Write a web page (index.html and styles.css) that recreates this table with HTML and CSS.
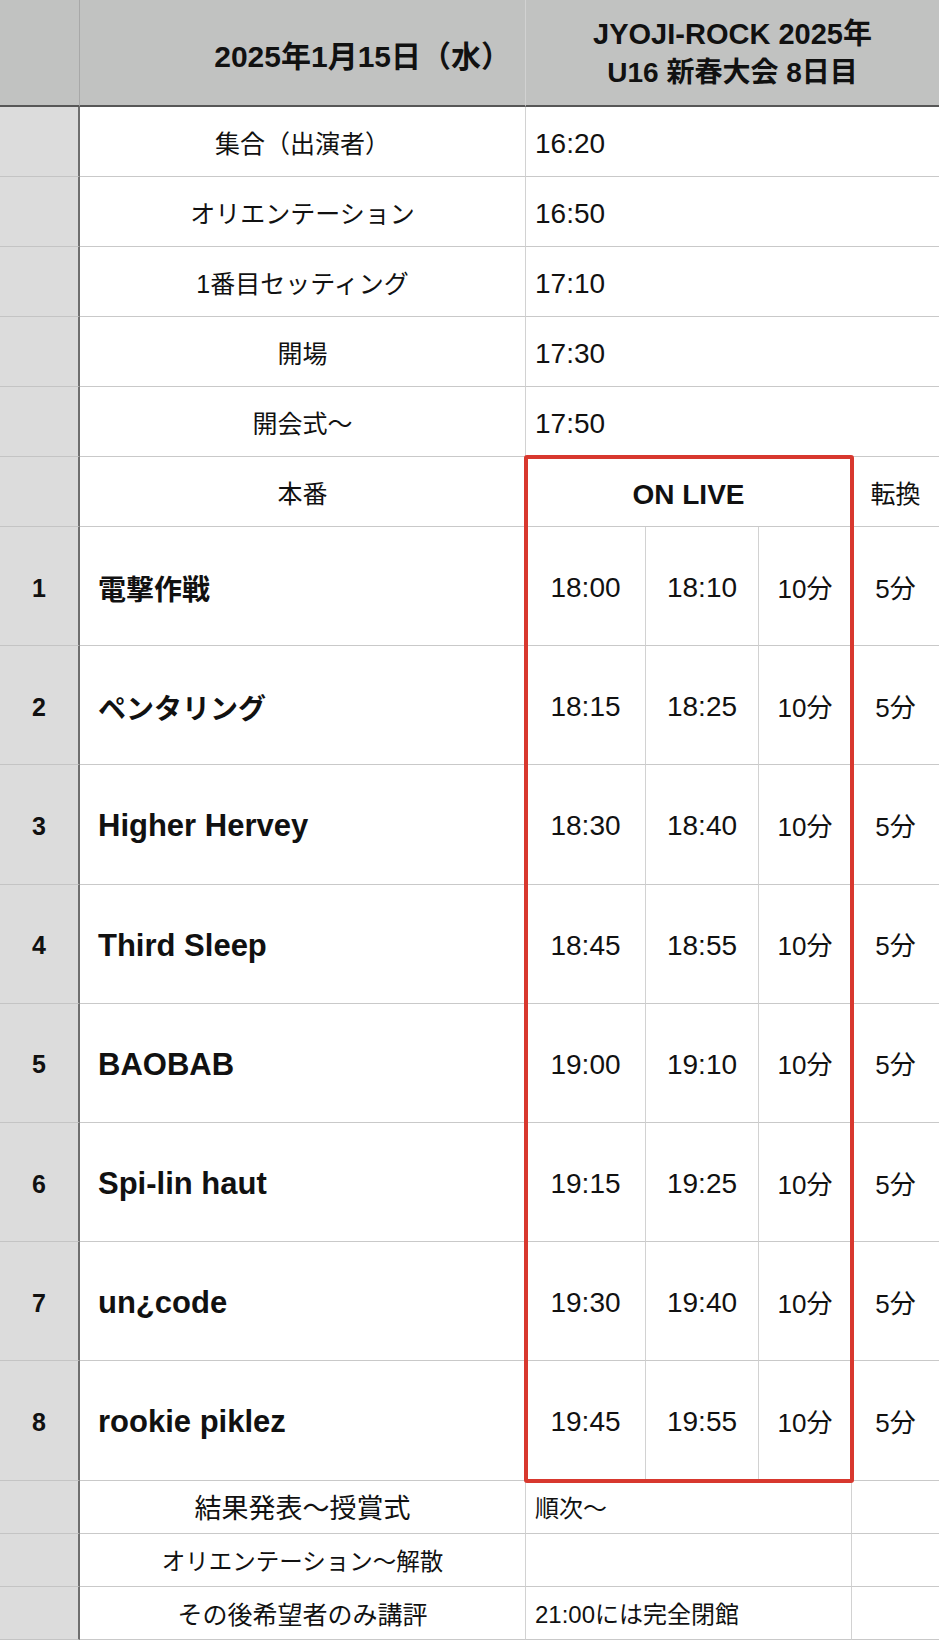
FILE: index.html
```html
<!DOCTYPE html>
<html lang="ja">
<head>
    <meta charset="UTF-8">
    <title>JYOJI-ROCK 2025年 U16 新春大会 8日目</title>
    <link rel="stylesheet" href="styles.css">
</head>
<body>
<div class="sheet">
    <div class="cell head idx"></div>
    <div class="cell head date">2025年1月15日（水）</div>
    <div class="cell head title span4">
        <p>JYOJI-ROCK 2025年<br><span class="sub">U16 新春大会 8日目</span></p>
    </div>

    <div class="cell idx"></div>
    <div class="cell label">集合（出演者）</div>
    <div class="cell time span4">16:20</div>

    <div class="cell idx"></div>
    <div class="cell label">オリエンテーション</div>
    <div class="cell time span4">16:50</div>

    <div class="cell idx"></div>
    <div class="cell label">1番目セッティング</div>
    <div class="cell time span4">17:10</div>

    <div class="cell idx"></div>
    <div class="cell label">開場</div>
    <div class="cell time span4">17:30</div>

    <div class="cell idx"></div>
    <div class="cell label">開会式～</div>
    <div class="cell time span4">17:50</div>

    <div class="cell idx"></div>
    <div class="cell label">本番</div>
    <div class="cell live span3">ON LIVE</div>
    <div class="cell change last">転換</div>

    <div class="cell idx">1</div>
    <div class="cell band jp">電撃作戦</div>
    <div class="cell slot">18:00</div>
    <div class="cell slot">18:10</div>
    <div class="cell dur">10分</div>
    <div class="cell dur last">5分</div>

    <div class="cell idx">2</div>
    <div class="cell band jp">ペンタリング</div>
    <div class="cell slot">18:15</div>
    <div class="cell slot">18:25</div>
    <div class="cell dur">10分</div>
    <div class="cell dur last">5分</div>

    <div class="cell idx">3</div>
    <div class="cell band">Higher Hervey</div>
    <div class="cell slot">18:30</div>
    <div class="cell slot">18:40</div>
    <div class="cell dur">10分</div>
    <div class="cell dur last">5分</div>

    <div class="cell idx">4</div>
    <div class="cell band">Third Sleep</div>
    <div class="cell slot">18:45</div>
    <div class="cell slot">18:55</div>
    <div class="cell dur">10分</div>
    <div class="cell dur last">5分</div>

    <div class="cell idx">5</div>
    <div class="cell band">BAOBAB</div>
    <div class="cell slot">19:00</div>
    <div class="cell slot">19:10</div>
    <div class="cell dur">10分</div>
    <div class="cell dur last">5分</div>

    <div class="cell idx">6</div>
    <div class="cell band">Spi-lin haut</div>
    <div class="cell slot">19:15</div>
    <div class="cell slot">19:25</div>
    <div class="cell dur">10分</div>
    <div class="cell dur last">5分</div>

    <div class="cell idx">7</div>
    <div class="cell band">un¿code</div>
    <div class="cell slot">19:30</div>
    <div class="cell slot">19:40</div>
    <div class="cell dur">10分</div>
    <div class="cell dur last">5分</div>

    <div class="cell idx">8</div>
    <div class="cell band">rookie piklez</div>
    <div class="cell slot">19:45</div>
    <div class="cell slot">19:55</div>
    <div class="cell dur">10分</div>
    <div class="cell dur last">5分</div>

    <div class="cell idx"></div>
    <div class="cell label size-l">結果発表～授賞式</div>
    <div class="cell note span3">順次～</div>
    <div class="cell last"></div>

    <div class="cell idx"></div>
    <div class="cell label size-s">オリエンテーション～解散</div>
    <div class="cell note span3"></div>
    <div class="cell last"></div>

    <div class="cell idx"></div>
    <div class="cell label">その後希望者のみ講評</div>
    <div class="cell note span3">21:00には完全閉館</div>
    <div class="cell last"></div>

    <div class="live-frame"></div>
</div>
</body>
</html>
```

FILE: styles.css
```css
* {
    padding: 0;
    margin: 0;
    box-sizing: border-box;
}

body {
    font-family: "Liberation Sans", "Noto Sans CJK JP", sans-serif;
    color: #111;
    background: #fff;
}

.sheet {
    position: relative;
    display: grid;
    grid-template-columns: 80px 446px 120px 113px 93px 87px;
    grid-template-rows: 107px repeat(6, 70px) repeat(8, 119.2px) repeat(3, 53.1px);
}

.cell {
    display: flex;
    align-items: center;
    border-right: 1px solid #d2d2d2;
    border-bottom: 1px solid #c9c9c9;
    font-size: 25px;
    white-space: nowrap;
}

.span4 {
    grid-column: span 4;
    border-right: 0;
}

.span3 {
    grid-column: span 3;
}

.last {
    border-right: 0;
}

.idx {
    justify-content: center;
    padding-top: 4px;
    background: #dcdcdc;
    border-right: 2px solid #6f6f6f;
    border-bottom-color: #c4c4c4;
    font-weight: bold;
    font-size: 25px;
}

.head {
    background: #c1c2c1;
    border-bottom: 2px solid #575757;
    font-weight: bold;
}

.head.idx {
    border-right: 1px solid #a8a8a8;
}

.date {
    justify-content: flex-end;
    padding-right: 14px;
    padding-top: 2px;
    font-size: 30px;
}

.title {
    justify-content: center;
    text-align: center;
    padding-top: 2px;
    font-size: 29px;
    line-height: 38px;
}

.title .sub {
    font-size: 28px;
}

.label {
    justify-content: center;
}

.size-l {
    font-size: 27px;
}

.size-s {
    font-size: 23.5px;
}

.time {
    padding-left: 9px;
    padding-top: 4px;
    font-size: 28px;
}

.live {
    justify-content: center;
    padding-top: 6px;
    font-weight: bold;
    font-size: 28px;
}

.change {
    justify-content: center;
}

.band {
    padding-left: 18px;
    padding-top: 4px;
    font-weight: bold;
    font-size: 31px;
}

.band.jp {
    font-size: 28px;
}

.slot {
    justify-content: center;
    padding-top: 4px;
    font-size: 28px;
}

.dur {
    justify-content: center;
    font-size: 26px;
}

.note {
    padding-left: 9px;
    font-size: 24px;
}

/* red highlight round the live block */
.live-frame {
    position: absolute;
    grid-column: 3 / 6;
    grid-row: 7 / 16;
    inset: -2px;
    border: 4px solid #d8382e;
    border-radius: 3px;
    pointer-events: none;
}
```
